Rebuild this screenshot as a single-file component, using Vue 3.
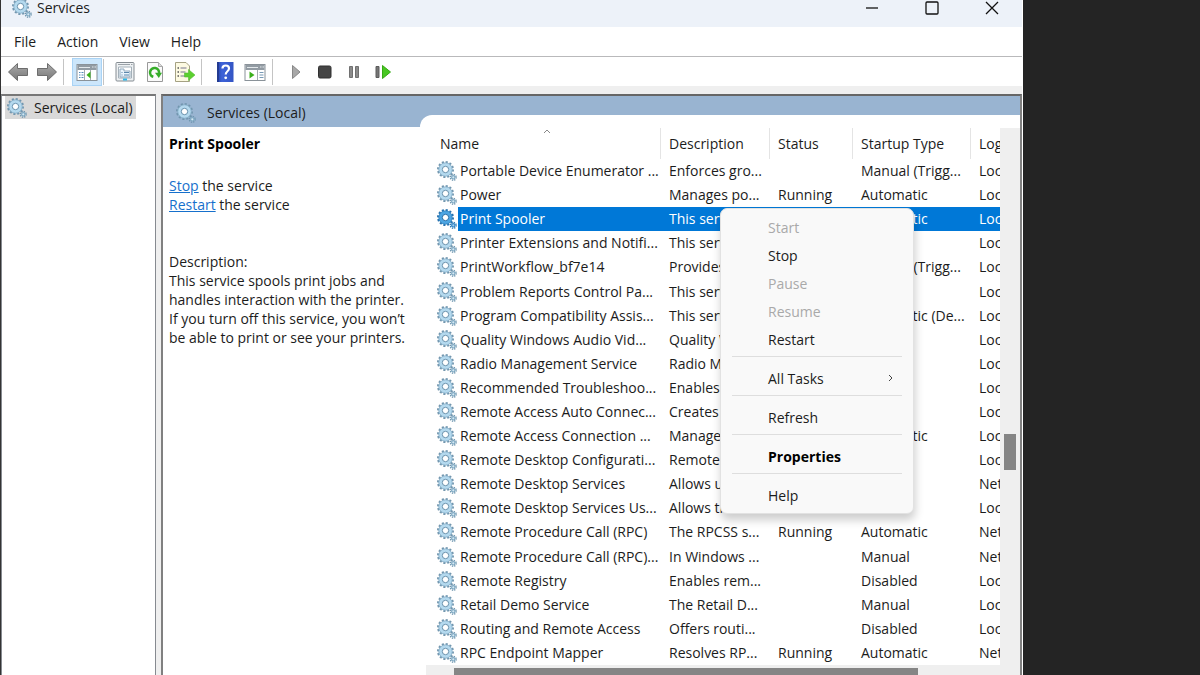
<script setup>
const menus = ['File', 'Action', 'View', 'Help']

const services = [
  ['Portable Device Enumerator ...', 'Enforces gro...', '', 'Manual (Trigg...', 'Local System'],
  ['Power', 'Manages po...', 'Running', 'Automatic', 'Local System'],
  ['Print Spooler', 'This service ...', 'Running', 'Automatic', 'Local System'],
  ['Printer Extensions and Notifi...', 'This service ...', '', 'Manual', 'Local System'],
  ['PrintWorkflow_bf7e14', 'Provides su...', '', 'Manual (Trigg...', 'Local System'],
  ['Problem Reports Control Pa...', 'This service ...', '', 'Manual', 'Local System'],
  ['Program Compatibility Assis...', 'This service ...', 'Running', 'Automatic (De...', 'Local System'],
  ['Quality Windows Audio Vid...', 'Quality Win...', '', 'Manual', 'Local Service'],
  ['Radio Management Service', 'Radio Mana...', '', 'Manual', 'Local Service'],
  ['Recommended Troubleshoo...', 'Enables aut...', '', 'Manual', 'Local System'],
  ['Remote Access Auto Connec...', 'Creates a co...', '', 'Manual', 'Local System'],
  ['Remote Access Connection ...', 'Manages di...', 'Running', 'Automatic', 'Local System'],
  ['Remote Desktop Configurati...', 'Remote Des...', '', 'Manual', 'Local System'],
  ['Remote Desktop Services', 'Allows user...', '', 'Manual', 'Network Service'],
  ['Remote Desktop Services Us...', 'Allows the r...', '', 'Manual', 'Local System'],
  ['Remote Procedure Call (RPC)', 'The RPCSS s...', 'Running', 'Automatic', 'Network Service'],
  ['Remote Procedure Call (RPC)...', 'In Windows ...', '', 'Manual', 'Network Service'],
  ['Remote Registry', 'Enables rem...', '', 'Disabled', 'Local Service'],
  ['Retail Demo Service', 'The Retail D...', '', 'Manual', 'Local System'],
  ['Routing and Remote Access', 'Offers routi...', '', 'Disabled', 'Local System'],
  ['RPC Endpoint Mapper', 'Resolves RP...', 'Running', 'Automatic', 'Network Service'],
]

const actions = [
  [
    { label: 'Start', disabled: true },
    { label: 'Stop' },
    { label: 'Pause', disabled: true },
    { label: 'Resume', disabled: true },
    { label: 'Restart' },
  ],
  [{ label: 'All Tasks', sub: true }],
  [{ label: 'Refresh' }],
  [{ label: 'Properties', strong: true }],
  [{ label: 'Help' }],
]
</script>

<template>
  <svg class="defs" aria-hidden="true">
    <symbol id="gear" viewBox="0 0 20 20">
      <circle cx="8.5" cy="8.5" r="7.4" fill="none" stroke="#7296ae" stroke-width="2.2" stroke-dasharray="2.1 1.77" />
      <circle cx="8.5" cy="8.5" r="4.9" fill="none" stroke="#b4d9ee" stroke-width="3.8" />
      <circle cx="8.5" cy="8.5" r="6.7" fill="none" stroke="#83abc5" stroke-width="0.8" />
      <circle cx="8.5" cy="8.5" r="3.2" fill="#fff" stroke="#6791ad" stroke-width="1" />
      <circle cx="16.3" cy="16.3" r="2.9" fill="none" stroke="#6e95ae" stroke-width="1.4" stroke-dasharray="1.3 0.98" />
      <circle cx="16.3" cy="16.3" r="1.7" fill="#d4e8f3" stroke="#7fa9c3" stroke-width="1.2" />
    </symbol>
    <symbol id="gear-selected" viewBox="0 0 20 20">
      <circle cx="8.5" cy="8.5" r="7.4" fill="none" stroke="#2671ae" stroke-width="2.2" stroke-dasharray="2.1 1.77" />
      <circle cx="8.5" cy="8.5" r="4.9" fill="none" stroke="#4da5e2" stroke-width="3.8" />
      <circle cx="8.5" cy="8.5" r="6.7" fill="none" stroke="#2c7fbd" stroke-width="0.8" />
      <circle cx="8.5" cy="8.5" r="3.2" fill="#fff" stroke="#226ba6" stroke-width="1" />
      <circle cx="16.3" cy="16.3" r="2.9" fill="none" stroke="#2b76b2" stroke-width="1.4" stroke-dasharray="1.3 0.98" />
      <circle cx="16.3" cy="16.3" r="1.7" fill="#9ccbee" stroke="#3788c6" stroke-width="1.2" />
    </symbol>
    <linearGradient id="steel" x1="0" y1="0" x2="0" y2="1">
      <stop offset="0" stop-color="#ababab" />
      <stop offset="1" stop-color="#777" />
    </linearGradient>
    <linearGradient id="royal" x1="0" y1="0" x2="1" y2="0">
      <stop offset="0" stop-color="#2442a8" />
      <stop offset="0.3" stop-color="#3d62d8" />
      <stop offset="1" stop-color="#3455c4" />
    </linearGradient>
  </svg>

  <main class="window">
    <header class="titlebar">
      <svg class="gear"><use href="#gear" /></svg>
      <h1>Services</h1>
      <div class="captions">
        <button aria-label="Minimize"><svg viewBox="0 0 14 14"><path d="M1 7h12" /></svg></button>
        <button aria-label="Maximize"><svg viewBox="0 0 14 14"><rect x="1" y="1" width="12" height="12" rx="1" /></svg></button>
        <button aria-label="Close"><svg viewBox="0 0 14 14"><path d="M1 1l12 12M13 1L1 13" /></svg></button>
      </div>
    </header>

    <nav class="menubar">
      <button v-for="m in menus" :key="m">{{ m }}</button>
    </nav>

    <div class="toolbar" role="toolbar">
      <button class="narrow" aria-label="Back">
        <svg viewBox="0 0 22 20"><path d="M1.500 10L10.500 1.500V6.500H20.500V13.500H10.500V18.500Z" fill="url(#steel)" stroke="#6d6d6d" /></svg>
      </button>
      <button class="narrow" aria-label="Forward">
        <svg viewBox="0 0 22 20"><path d="M20.500 10L11.500 1.500V6.500H1.500V13.500H11.500V18.500Z" fill="url(#steel)" stroke="#6d6d6d" /></svg>
      </button>
      <i class="divider"></i>
      <button class="active" aria-label="Show or hide console tree">
        <svg viewBox="0 0 22 20">
          <rect x="1" y="2.500" width="20" height="16" fill="#fff" stroke="#8a9299" />
          <rect x="1.500" y="3" width="19" height="5" fill="#929ba3" />
          <path d="M3 5.500h11M16 5h1.500M18.500 5H20" stroke="#e3e8eb" />
          <path d="M8.500 8v10M14.500 8v10" stroke="#a4abb1" />
          <path d="M3 10.500h1.500M5.500 10.500h2M3 13h1.500M5.500 13h2M3 15.500h1.500M5.500 15.500h2" stroke="#5288ba" />
          <path d="M14.500 9.500v7L10.500 13z" fill="#3caf1b" />
        </svg>
      </button>
      <i class="divider tight"></i>
      <button aria-label="Properties">
        <svg viewBox="0 0 22 20">
          <rect x="2" y="0.500" width="18" height="18.500" rx="1" fill="#eef1f3" stroke="#858c92" />
          <path d="M4 2.500h12M17 2.500h1.500" stroke="#9ba2a8" />
          <path d="M4.500 5h13v11h-13z" fill="#fff" stroke="#a4b0b9" />
          <path d="M6 7h4v2h6v6H6z" fill="#eaf5fc" stroke="#91a9bc" />
          <path d="M7.500 10.500h1M10 10.500h5M7.500 13h1M10 13h5" stroke="#5a87ac" />
          <path d="M9 17.500h4" stroke="#2fb9e8" stroke-width="2" />
        </svg>
      </button>
      <button aria-label="Refresh">
        <svg viewBox="0 0 22 20">
          <path d="M3.500 0.500h11l4 4v15h-15z" fill="#fafafa" stroke="#999" />
          <path d="M14.500 0.500v4h4" fill="#ddd" stroke="#aaa" />
          <path d="M9.300 14.800A4.500 4.500 0 1 1 15 11" fill="none" stroke="#35ac28" stroke-width="2.600" />
          <path d="M11 10.800h7L14.800 16z" fill="#35ac28" />
        </svg>
      </button>
      <button class="narrow" aria-label="Export list">
        <svg viewBox="0 0 22 20">
          <path d="M1.500 0.500h10.500l3.500 3.500v15.500h-14z" fill="#fdfae2" stroke="#a5a183" />
          <path d="M3.500 6h1.500M3.500 10h1.500M3.500 14h1.500" stroke="#555" stroke-width="1.500" />
          <path d="M6.500 6h6M6.500 10h5M6.500 14h5" stroke="#77758f" />
          <path d="M10.500 11h4V7.500l6.500 5.500-6.500 5.500V15h-4z" fill="#5cd02f" stroke="#55b835" stroke-width="0.600" />
        </svg>
      </button>
      <i class="divider"></i>
      <button aria-label="Help topics">
        <svg viewBox="0 0 22 20">
          <rect x="3" width="16.500" height="20" fill="url(#royal)" />
          <path d="M3 0h2v20H3z" fill="#233b91" />
          <path d="M8.500 6.500C8.500 2.500 15 2.500 15 6.500C15 9.500 11.700 9 11.700 12.500" fill="none" stroke="#fff" stroke-width="2.200" />
          <circle cx="11.700" cy="15.800" r="1.400" fill="#fff" />
        </svg>
      </button>
      <button aria-label="Show or hide action pane">
        <svg viewBox="0 0 22 20">
          <rect x="1" y="2.500" width="20" height="16" fill="#fff" stroke="#8a9299" />
          <rect x="1.500" y="3" width="19" height="5" fill="#929ba3" />
          <path d="M3 5.500h11M16 5h1.500M18.500 5H20" stroke="#e3e8eb" />
          <path d="M13.500 8v10" stroke="#a4abb1" />
          <path d="M15.500 10.500h4M15.500 13h4M15.500 15.500h4" stroke="#7899b5" />
          <path d="M5.500 9.500v7L10.500 13z" fill="#3caf1b" />
        </svg>
      </button>
      <i class="divider"></i>
      <button class="narrow" aria-label="Start service">
        <svg viewBox="0 0 22 20"><path d="M7.500 3.500v13L15 10z" fill="#a8a8a8" stroke="#888" /></svg>
      </button>
      <button class="narrow" aria-label="Stop service">
        <svg viewBox="0 0 22 20"><rect x="4.500" y="4" width="12.500" height="12" rx="1.500" fill="#454545" stroke="#303030" /></svg>
      </button>
      <button class="narrow" aria-label="Pause service">
        <svg viewBox="0 0 22 20"><path d="M6.500 4.500h3v11h-3zM12.500 4.500h3v11h-3z" fill="#8b8b8b" stroke="#707070" /></svg>
      </button>
      <button class="narrow" aria-label="Restart service">
        <svg viewBox="0 0 22 20">
          <path d="M4 4.500h3v11H4z" fill="#757575" stroke="#5c5c5c" />
          <path d="M10.500 3.500v13L18.500 10z" fill="#48c722" stroke="#36a915" />
        </svg>
      </button>
    </div>

    <div class="panes">
      <aside class="tree">
        <button class="node"><svg class="gear"><use href="#gear" /></svg>Services (Local)</button>
      </aside>

      <section class="content">
        <header class="strip">
          <svg class="gear"><use href="#gear" /></svg>
          <h2>Services (Local)</h2>
        </header>
        <div class="body">
          <article class="details">
            <h3>Print Spooler</h3>
            <p><a href="#stop">Stop</a> the service<br /><a href="#restart">Restart</a> the service</p>
            <p class="about">
              Description:<br />This service spools print jobs and<br />handles interaction with the printer.<br />If
              you turn off this service, you won’t<br />be able to print or see your printers.
            </p>
          </article>

          <div class="list">
            <div class="viewport">
              <table>
                <colgroup>
                  <col class="c-name" /><col class="c-desc" /><col class="c-status" /><col class="c-type" /><col />
                </colgroup>
                <thead>
                  <tr>
                    <th class="sorted">
                      <svg class="sort" viewBox="0 0 8 5"><path d="M1 4l3-3 3 3" /></svg>
                      Name
                    </th>
                    <th>Description</th>
                    <th>Status</th>
                    <th>Startup Type</th>
                    <th>Log On As</th>
                  </tr>
                </thead>
                <tbody>
                  <tr v-for="s in services" :key="s[0]" :class="{ selected: s[0] === 'Print Spooler' }">
                    <td class="name">
                      <div>
                        <svg class="gear"><use :href="s[0] === 'Print Spooler' ? '#gear-selected' : '#gear'" /></svg>
                        <span>{{ s[0] }}</span>
                      </div>
                    </td>
                    <td>{{ s[1] }}</td>
                    <td>{{ s[2] }}</td>
                    <td>{{ s[3] }}</td>
                    <td>{{ s[4] }}</td>
                  </tr>
                </tbody>
              </table>
            </div>
            <div class="vscroll"><i></i></div>
            <div class="hscroll"><i></i></div>

            <div class="context" role="menu">
              <div v-for="(group, g) in actions" :key="g" class="group">
                <button v-for="a in group" :key="a.label" role="menuitem" :disabled="a.disabled" :class="{ strong: a.strong }">
                  {{ a.label }}
                  <svg v-if="a.sub" viewBox="0 0 5 8"><path d="M1 1l3 3-3 3" /></svg>
                </button>
              </div>
            </div>
          </div>
        </div>
      </section>
    </div>
  </main>
</template>

<style>
body {
  background: #242424;
  overflow: hidden;
}
</style>

<style scoped>
* {
  box-sizing: border-box;
}
.defs {
  position: absolute;
  width: 0;
  height: 0;
}
.window {
  display: flex;
  flex-direction: column;
  width: calc(100% - 177px);
  height: 100vh;
  border-left: 1px solid #333;
  border-right: 1px solid #fff;
  background: #fff;
  color: #1c1c1c;
  font: 14px/19px "Open Sans", "Noto Sans", sans-serif;
  overflow: hidden;
}
button {
  border: 0;
  padding: 0;
  background: none;
  color: inherit;
  font: inherit;
}
h1, h2, h3, p {
  margin: 0;
  font: inherit;
}
.gear {
  display: block;
  flex: none;
  width: 20px;
  height: 20px;
}
.titlebar {
  display: flex;
  flex: none;
  height: 27px;
  padding: 0 0 12px 11px;
  align-items: center;
  gap: 5px;
  background: #edf2f9;
}
.captions {
  display: flex;
  margin-left: auto;
}
.captions button {
  display: grid;
  place-items: center;
  width: 60px;
  height: 17px;
}
.captions svg {
  width: 14px;
  height: 14px;
  fill: none;
  stroke: #111;
  stroke-width: 1.3;
}
.menubar {
  display: flex;
  flex: none;
  align-items: center;
  gap: 21px;
  height: 30px;
  padding: 0 13px;
  border-bottom: 1px solid #b9b9bb;
}
.toolbar {
  display: flex;
  flex: none;
  align-items: center;
  height: 29px;
  padding: 1px 0 0 2px;
}
.toolbar button {
  display: grid;
  place-items: center;
  width: 30px;
  height: 28px;
}
.toolbar .narrow {
  width: 29px;
}
.toolbar svg {
  width: 22px;
  height: 20px;
}
.toolbar .active {
  background: #cce6fb;
  border: 1px solid #a9d3f5;
}
.divider {
  width: 1px;
  height: 26px;
  margin: 0 8px 0 2px;
  background: #c4c4c4;
}
.tight {
  margin: 0 6px 0 1px;
}
.panes {
  display: flex;
  flex: 1;
  min-height: 0;
  gap: 5px;
  padding-top: 8px;
  background: #efefef;
}
.tree {
  flex: none;
  width: 155px;
  padding: 0 3px;
  border: 1px solid #868a90;
  border-top: 2px solid #777;
  border-bottom: 0;
  background: #fff;
}
.node {
  display: flex;
  align-items: center;
  gap: 7px;
  height: 23px;
  padding: 0 3px 0 2px;
  background: #d9d9d9;
}
.content {
  display: flex;
  flex: 1;
  flex-direction: column;
  min-width: 0;
  border: 2px solid #808080;
  border-top-color: #666;
  border-bottom: 0;
  background: #99b4d1;
}
.strip {
  display: flex;
  flex: none;
  align-items: center;
  gap: 11px;
  height: 19px;
  padding: 14px 0 0 13px;
}
.body {
  display: flex;
  flex: 1;
  min-height: 0;
}
.details {
  flex: none;
  width: 257px;
  margin-top: 12px;
  padding: 7px 0 0 6px;
  background: #fff;
  white-space: nowrap;
}
.details h3 {
  margin-bottom: 23px;
  color: #000;
  font-weight: 700;
}
.details a {
  color: #1670cc;
  text-decoration: underline;
}
.about {
  margin-top: 38px;
}
.list {
  position: relative;
  display: grid;
  flex: 1;
  grid-template-columns: minmax(0, 1fr) 20px;
  grid-template-rows: minmax(0, 1fr) 10px;
  min-width: 0;
  padding-top: 13px;
  border-top-left-radius: 12px;
  background: #fff;
}
.viewport {
  overflow: hidden;
  padding-left: 14px;
}
table {
  width: 100%;
  height: 100%;
  border-spacing: 0;
  table-layout: fixed;
}
.c-name { width: 227px; }
.c-desc { width: 109px; }
.c-status { width: 83px; }
.c-type { width: 118px; }
th,
td {
  padding: 0 0 0 8px;
  overflow: hidden;
  font-weight: 400;
  text-align: left;
  white-space: nowrap;
}
td {
  line-height: 24px;
}
th {
  height: 31px;
  border-right: 1px solid #e4e4e4;
}
th:last-child {
  border-right: 0;
}
.sorted {
  position: relative;
  padding-left: 6px;
}
.sort {
  position: absolute;
  top: 1px;
  left: 109px;
  width: 8px;
  height: 5px;
  fill: none;
  stroke: #888;
}
td.name {
  padding-left: 3px;
}
.name div {
  display: flex;
  align-items: center;
  height: 24px;
}
.name span {
  flex: 1;
  padding-left: 3px;
}
.selected td {
  background: #0078d7;
  color: #fff;
}
.selected td.name {
  background: linear-gradient(to right, #fff 24px, #0078d7 24px);
}
.vscroll {
  padding: 306px 4px 0;
  background: #efefef;
}
.vscroll i {
  display: block;
  height: 36px;
  background: #858585;
}
.hscroll {
  grid-column: 1 / -1;
  margin-left: 6px;
  padding: 3px 102px 0 28px;
  background: #efefef;
}
.hscroll i {
  display: block;
  height: 100%;
  background: #858585;
}
.context {
  position: absolute;
  top: 93px;
  left: 300px;
  width: 194px;
  padding: 4px 11px;
  border: 1px solid #e2e2e2;
  border-radius: 7px;
  background: #f9f9f9;
  box-shadow: 1px 6px 10px rgba(0, 0, 0, 0.2);
}
.group + .group {
  margin-top: 3px;
  padding-top: 7px;
  border-top: 1px solid #dedede;
}
.group button {
  display: flex;
  align-items: center;
  justify-content: space-between;
  width: 100%;
  height: 28px;
  padding: 0 9px 0 36px;
}
.group button:disabled {
  color: #a9a9a9;
}
.group .strong {
  color: #000;
  font-weight: 700;
}
.group svg {
  width: 5px;
  height: 8px;
  fill: none;
  stroke: #444;
}
</style>
